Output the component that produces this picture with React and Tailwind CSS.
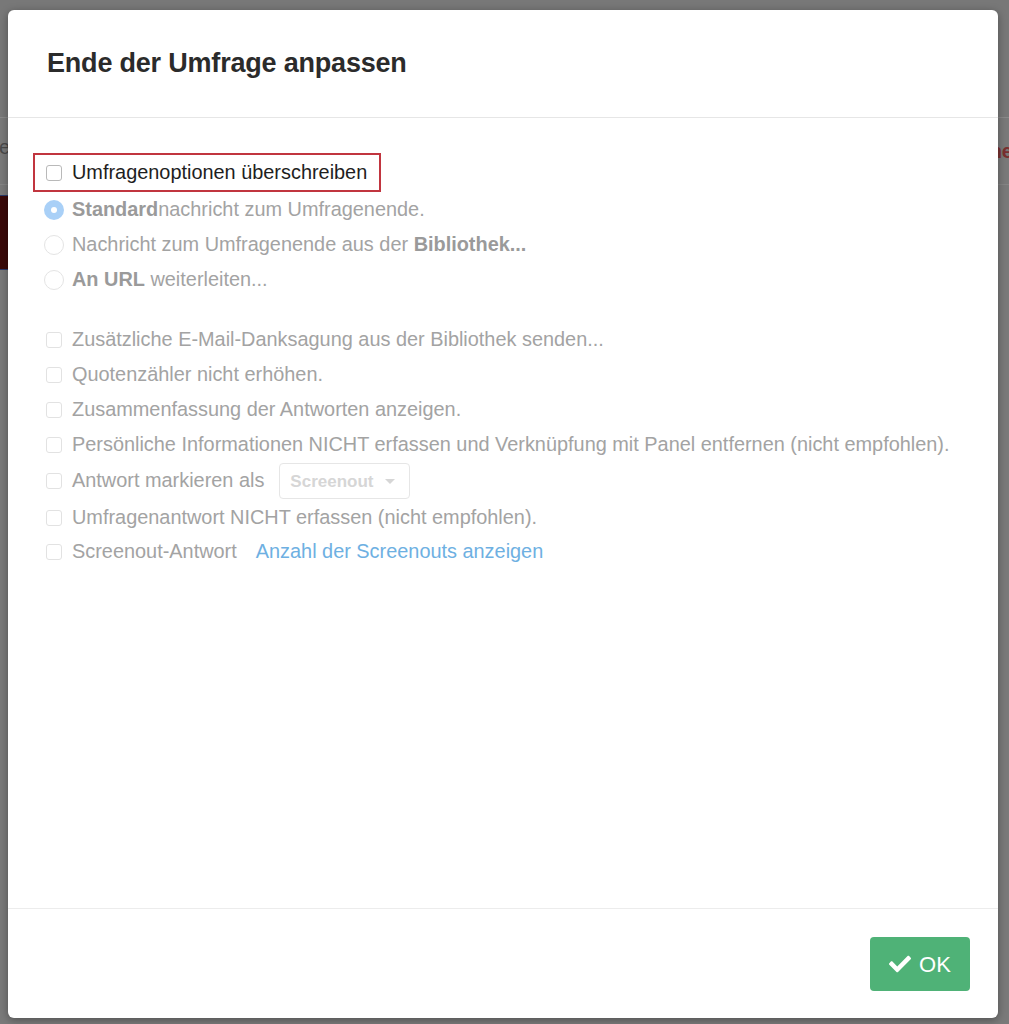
import React from "react"
import { FaCheck } from "react-icons/fa"

const Check = ({ strong }) => (
	<span
		className={
			"shrink-0 w-4 h-4 rounded-[3px] border bg-white " +
			(strong ? "border-[#b9b9b9]" : "border-[#e2e2e2]")
		}
	/>
)

const Radio = ({ on }) =>
	on ? (
		<span className="shrink-0 w-5 h-5 rounded-full bg-[#a9d0f7] flex items-center justify-center">
			<span className="w-[6px] h-[6px] rounded-full bg-white" />
		</span>
	) : (
		<span className="shrink-0 w-5 h-5 rounded-full border border-[#e4e4e4] bg-white" />
	)

const RadioRow = ({ on, children }) => (
	<div className="h-[35px] pl-[11px] flex items-center gap-2">
		<Radio on={on} />
		<span className="text-[#a3a3a3]">{children}</span>
	</div>
)

const CheckRow = ({ children, className = "h-[35px]" }) => (
	<div className={"pl-[13px] flex items-center gap-[10px] " + className}>
		<Check />
		{children}
	</div>
)

export default function App() {
	return (
		<div
			className="relative h-[1024px] w-full overflow-hidden bg-[#7a7a7a]"
			style={{ fontFamily: '"Liberation Sans", Arial, sans-serif' }}
		>
			{/* dimmed page behind the dialog */}
			<div className="h-[118px] bg-[#787878] border-b border-[#8a8a8a]" />
			<div className="h-[67px] flex items-center justify-between border-b border-[#858585]">
				<span className="-ml-[1px] -mt-[8px] text-[20px] text-[#4a4a4a]">e</span>
				<span className="mr-[-4px] text-[20px] font-bold text-[#7a3030]">ne</span>
			</div>
			<div className="mt-[10px] w-[20px] h-[75px] bg-[#3a0909] border-y border-[#2a3a6a]" />

			{/* dialog */}
			<div className="absolute left-2 top-[10px] w-[990px] h-[1008px] bg-white rounded-[6px] shadow-[0_2px_8px_rgba(0,0,0,0.35)] flex flex-col">
				<div className="h-[108px] shrink-0 border-b border-[#e6e6e6] flex items-center pl-[39px]">
					<h1 className="text-[27px] font-bold text-[#2b2b2b] tracking-[-0.2px]">
						Ende der Umfrage anpassen
					</h1>
				</div>

				<div className="flex-1 px-[25px] pt-[35px] text-[19.9px] leading-none">
					<div className="w-[348px] h-[39px] border-2 border-[#c1353f] flex items-center gap-[10px] pl-[11px]">
						<Check strong />
						<span className="text-[#1e1e1e]">Umfragenoptionen überschreiben</span>
					</div>

					<RadioRow on>
						<b className="text-[#9a9a9a]">Standard</b>nachricht zum Umfragenende.
					</RadioRow>
					<RadioRow>
						Nachricht zum Umfragenende aus der <b className="text-[#9a9a9a]">Bibliothek...</b>
					</RadioRow>
					<RadioRow>
						<b className="text-[#9a9a9a]">An URL</b> weiterleiten...
					</RadioRow>

					<div className="h-[25px]" />

					<div className="text-[#a3a3a3]">
						<CheckRow>Zusätzliche E-Mail-Danksagung aus der Bibliothek senden...</CheckRow>
						<CheckRow>Quotenzähler nicht erhöhen.</CheckRow>
						<CheckRow>Zusammenfassung der Antworten anzeigen.</CheckRow>
						<CheckRow>
							Persönliche Informationen NICHT erfassen und Verknüpfung mit Panel entfernen (nicht empfohlen).
						</CheckRow>
						<CheckRow className="h-[38px]">
							<span>Antwort markieren als</span>
							<div className="ml-[5px] w-[131px] h-[36px] rounded-[4px] border border-[#e6e6e6] flex items-center pl-[10px] gap-[12px]">
								<span className="text-[17px] font-bold text-[#d6d6d6]">Screenout</span>
								<span className="w-0 h-0 border-x-[5px] border-x-transparent border-t-[5px] border-t-[#d6d6d6]" />
							</div>
						</CheckRow>
						<CheckRow>Umfragenantwort NICHT erfassen (nicht empfohlen).</CheckRow>
						<CheckRow className="h-[34px]">
							<span>Screenout-Antwort</span>
							<span className="ml-[9px] text-[#6eb0e2]">Anzahl der Screenouts anzeigen</span>
						</CheckRow>
					</div>
				</div>

				<div className="h-[110px] shrink-0 border-t border-[#ececec] flex items-start justify-end pt-[28px] pr-[28px]">
					<button className="w-[100px] h-[54px] rounded-[4px] bg-[#4fb277] text-white flex items-center justify-center gap-[8px] text-[22px]">
						<FaCheck className="w-[22px] h-[22px]" />
						<span>OK</span>
					</button>
				</div>
			</div>
		</div>
	)
}
